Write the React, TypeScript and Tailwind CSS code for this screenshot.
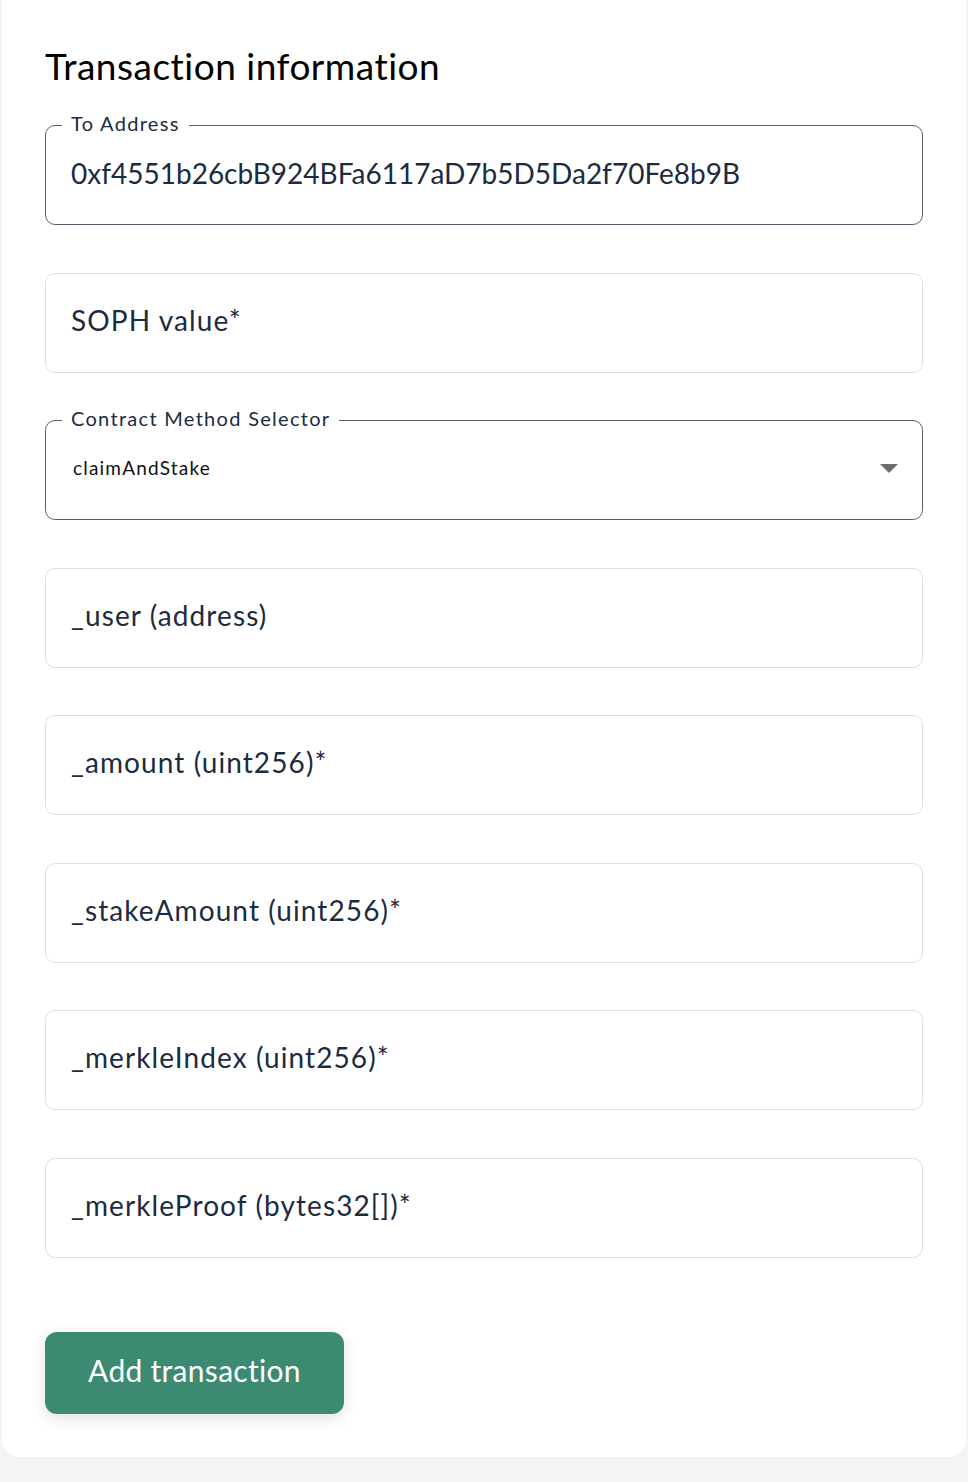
import React from "react";

const font = { fontFamily: "Lato, 'Open Sans', sans-serif" };

const params = [
  "_user (address)",
  "_amount (uint256)*",
  "_stakeAmount (uint256)*",
  "_merkleIndex (uint256)*",
  "_merkleProof (bytes32[])*",
];

function Outlined({ label, children }: { label: string; children: React.ReactNode }) {
  return (
    <div className="relative flex h-[100px] items-center rounded-[10px] border border-[#58626e] px-[25px] pb-[5px]">
      <span className="absolute -top-[17px] left-[16px] bg-white px-[9px] text-[20px] leading-[28px] tracking-[1.3px] text-[#1c2b3f]">
        {label}
      </span>
      {children}
    </div>
  );
}

function Empty({ text }: { text: string }) {
  return (
    <div className="flex h-[100px] items-center rounded-[10px] border border-[#dedfe1] px-[25px] pb-[6px] text-[28px] tracking-[1.1px] text-[#1c2b3f]">
      {text}
    </div>
  );
}

export default function App() {
  return (
    <div className="min-h-[1482px] bg-[#f4f4f4] pl-[2px] pr-[2px]" style={font}>
      <div className="rounded-b-[18px] bg-white px-[43px] pb-[43px] pt-[44px]">
        <h2 className="text-[37px] leading-[44px] tracking-[0.5px] text-black">Transaction information</h2>
        <div className="mt-[37px] flex flex-col gap-[47.5px]">
          <Outlined label="To Address">
            <span className="text-[28px] text-[#1c2b3f]">0xf4551b26cbB924BFa6117aD7b5D5Da2f70Fe8b9B</span>
          </Outlined>
          <Empty text="SOPH value*" />
          <Outlined label="Contract Method Selector">
            <div className="flex w-full items-center justify-between pl-[2px] pt-[2px]">
              <span className="text-[19px] tracking-[1.2px] text-[#111]">claimAndStake</span>
              <svg width="18" height="10" viewBox="0 0 18 10" className="mr-[-1px]">
                <path d="M0 0h18L9 9z" fill="#6e6e6e" />
              </svg>
            </div>
          </Outlined>
          {params.map((p) => (
            <Empty key={p} text={p} />
          ))}
        </div>
        <button className="mt-[74px] h-[82px] w-[299px] rounded-[12px] bg-[#3d8a73] pb-[4px] text-[30px] tracking-[0.3px] text-white shadow-[0_4px_16px_rgba(0,0,0,0.12)]">
          Add transaction
        </button>
      </div>
    </div>
  );
}
